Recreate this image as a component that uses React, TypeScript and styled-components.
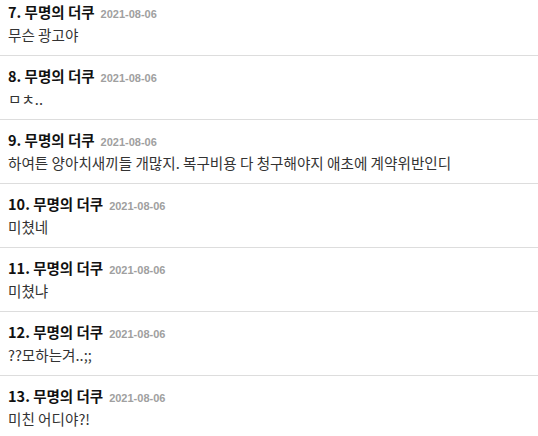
import React from 'react';
import styled, { createGlobalStyle } from 'styled-components';

const GlobalStyle = createGlobalStyle`
  html, body { margin: 0; padding: 0; background: #fff; }
  body { font-family: "Noto Sans CJK KR", "Noto Sans", sans-serif; }
`;

// ── Styled Components ─────────────────────────────────────────
const List = styled.ul`
  list-style: none;
  margin: 0;
  padding: 0;
  width: 538px;
`;

const Item = styled.li`
  padding: 11px 8px 10px;
  border-bottom: 1px solid #dddddd;
  &:first-child { padding-top: 3px; }
  &:last-child { border-bottom: none; }
`;

const Head = styled.div`
  display: flex;
  align-items: baseline;
  gap: 6px;
  height: 18px;
  line-height: 18px;
`;

const Name = styled.strong`
  font-size: 14.5px;
  font-weight: 700;
  color: #111;
`;

const Date = styled.span`
  font-family: "Liberation Sans", Arial, sans-serif;
  font-size: 11px;
  font-weight: 700;
  color: #a0a0a0;
`;

const Body = styled.p`
  margin: 4px 0 0;
  font-size: 14.6px;
  line-height: 20px;
  color: #333;
`;

// ── Data ──────────────────────────────────────────────────────
interface Comment {
  no: number;
  text: string;
}

const comments: Comment[] = [
  { no: 7, text: '무슨 광고야' },
  { no: 8, text: 'ㅁㅊ..' },
  { no: 9, text: '하여튼 양아치새끼들 개많지. 복구비용 다 청구해야지 애초에 계약위반인디' },
  { no: 10, text: '미쳤네' },
  { no: 11, text: '미쳤냐' },
  { no: 12, text: '??모하는겨..;;' },
  { no: 13, text: '미친 어디야?!' },
];

export default function App() {
  return (
    <>
      <GlobalStyle />
      <List>
        {comments.map((c) => (
          <Item key={c.no}>
            <Head>
              <Name>{c.no}. 무명의 더쿠</Name>
              <Date>2021-08-06</Date>
            </Head>
            <Body>{c.text}</Body>
          </Item>
        ))}
      </List>
    </>
  );
}
